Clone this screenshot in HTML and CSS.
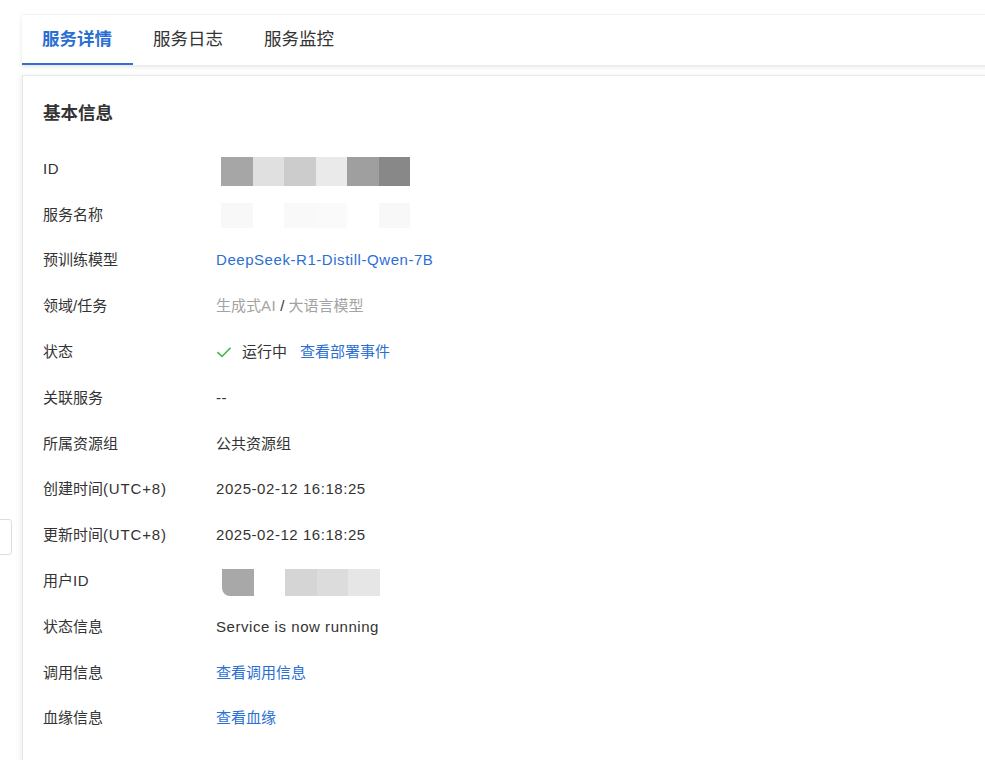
FILE: index.html
```html
<!DOCTYPE html>
<html lang="zh-CN">
  <head>
    <meta charset="utf-8">
    <title>服务详情</title>
    <link rel="stylesheet" href="styles.css">
  </head>
  <body>

  <div class="side-handle"></div>

  <div class="page">
    <div class="tabs">
      <div class="tab active">服务详情</div>
      <div class="tab">服务日志</div>
      <div class="tab">服务监控</div>
    </div>

    <div class="card">
      <div class="card-title">基本信息</div>

      <div class="info">
        <div class="label latin">ID</div>
        <div class="value">
          <span class="mosaic">
            <i style="background:#a6a6a6"></i><i style="background:#e0e0e0"></i><i style="background:#cccccc"></i><i style="background:#eaeaea"></i><i style="background:#9f9f9f"></i><i style="background:#888888"></i>
          </span>
        </div>

        <div class="label">服务名称</div>
        <div class="value">
          <span class="mosaic faint">
            <i style="background:#f8f8f8"></i><i style="background:#ffffff"></i><i style="background:#f9f9f9"></i><i style="background:#fafafa"></i><i style="background:#ffffff"></i><i style="background:#f8f8f8"></i>
          </span>
        </div>

        <div class="label">预训练模型</div>
        <div class="value"><a class="link latin" href="#">DeepSeek-R1-Distill-Qwen-7B</a></div>

        <div class="label">领域/任务</div>
        <div class="value muted">生成式<span class="latin">AI</span> <span class="sep">/</span> 大语言模型</div>

        <div class="label">状态</div>
        <div class="value">
          <svg class="check" width="16" height="16" viewBox="0 0 16 16"><path d="M1.5 8.2 L6 12.5 L14.5 3.8" fill="none" stroke="#3bb54a" stroke-width="1.6"/></svg>
          <span class="status">运行中</span>
          <a class="link" href="#">查看部署事件</a>
        </div>

        <div class="label">关联服务</div>
        <div class="value latin">--</div>

        <div class="label">所属资源组</div>
        <div class="value">公共资源组</div>

        <div class="label">创建时间<span class="utc">(UTC+8)</span></div>
        <div class="value latin">2025-02-12 16:18:25</div>

        <div class="label">更新时间<span class="utc">(UTC+8)</span></div>
        <div class="value latin">2025-02-12 16:18:25</div>

        <div class="label">用户<span class="latin">ID</span></div>
        <div class="value">
          <span class="mosaic user">
            <i class="round" style="background:#a8a8a8"></i><i style="background:#ffffff"></i><i style="background:#d5d5d5"></i><i style="background:#dcdcdc"></i><i style="background:#e6e6e6"></i>
          </span>
        </div>

        <div class="label">状态信息</div>
        <div class="value latin">Service is now running</div>

        <div class="label">调用信息</div>
        <div class="value"><a class="link" href="#">查看调用信息</a></div>

        <div class="label">血缘信息</div>
        <div class="value"><a class="link" href="#">查看血缘</a></div>
      </div>
    </div>
  </div>

  </body>
</html>
```

FILE: styles.css
```css
html {
  height: 100%;
}
body {
  margin: 0;
  padding: 0;
  background: #ffffff;
  color: #333333;
  font-family: "Liberation Sans", "Noto Sans CJK SC", sans-serif;
  font-size: 15px;
  overflow: hidden;
  height: 100%;
}

.page {
  margin: 14px -20px 0 22px;
}

.tabs {
  display: flex;
  height: 50px;
  background: #ffffff;
  box-shadow: 0 2px 4px rgba(0,0,0,0.10);
  border-top: 1px solid #f3f3f3;
}

.tab {
  padding: 0 21px 0 20px;
  font-size: 17.5px;
  line-height: 48px;
  color: #333333;
  border-bottom: 2px solid transparent;
}

.tab.active {
  color: #2b6fd4;
  font-weight: 600;
  border-bottom-color: #2f6fd6;
}

.card {
  margin-top: 10px;
  height: 720px;
  background: #ffffff;
  border: 1px solid #e6e6e6;
  box-shadow: -2px 0 5px rgba(0,0,0,0.06);
  padding: 25px 0 0 20px;
}

.card-title {
  font-size: 17.5px;
  font-weight: 600;
  line-height: 24px;
  color: #333333;
}

.info {
  margin-top: 21px;
  display: grid;
  grid-template-columns: 173px 1fr;
  grid-auto-rows: 45.8px;
  align-items: center;
}

.label {
  color: #333333;
  line-height: 22px;
}

.value {
  display: flex;
  align-items: center;
  line-height: 22px;
  color: #333333;
}

.latin {
  letter-spacing: 0.55px;
}

.utc {
  letter-spacing: 0.85px;
}

.muted {
  color: #a3a3a3;
}

.sep {
  color: #333333;
  margin: 0 4px;
}

.link {
  color: #2b6fd4;
  text-decoration: none;
}

.check {
  margin-right: 10px;
}

.status {
  margin-right: 13px;
}

.mosaic {
  display: flex;
  margin-left: 5px;
  margin-top: 6px;
}

.mosaic i {
  display: block;
  width: 31.5px;
  height: 29px;
}

.mosaic.faint {
  margin-top: 2px;
}

.mosaic.faint i {
  height: 25px;
}

.mosaic.user {
  margin-left: 6px;
  margin-top: 2px;
}

.mosaic.user i {
  height: 27px;
}

.mosaic .round {
  border-bottom-left-radius: 8px;
}

.side-handle {
  position: absolute;
  left: -4px;
  top: 519px;
  width: 14px;
  height: 34px;
  border: 1px solid #dddddd;
  border-radius: 3px;
  background: #ffffff;
}
```
